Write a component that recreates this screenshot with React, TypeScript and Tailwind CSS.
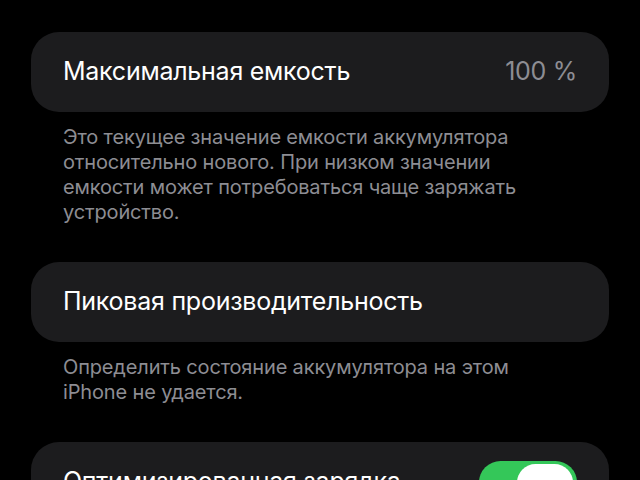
import React from "react";

const font = { fontFamily: "Inter, 'Noto Sans', 'Liberation Sans', sans-serif" };

function Card({ children }: { children: React.ReactNode }) {
  return (
    <div className="h-[80px] rounded-[28px] bg-[#1c1c1e] px-[32px] flex items-center justify-between">
      {children}
    </div>
  );
}

function Note({ children }: { children: React.ReactNode }) {
  return (
    <p className="mt-[13px] pl-[32px] pr-[56px] text-[20px] leading-[25px] text-[#8d8d93] tracking-[-0.15px]">
      {children}
    </p>
  );
}

function Toggle({ on }: { on: boolean }) {
  return (
    <div className={`relative w-[98px] h-[43px] rounded-full ${on ? "bg-[#34c759]" : "bg-[#39393d]"}`}>
      <div className="absolute right-[4px] top-[3px] w-[56px] h-[37px] rounded-full bg-white" />
    </div>
  );
}

export default function App() {
  return (
    <div className="w-[640px] h-[480px] overflow-hidden bg-black text-white" style={font}>
      <div className="px-[31px] pt-[32px]">
        <Card>
          <span className="text-[25px] tracking-[-0.25px]">Максимальная емкость</span>
          <span className="text-[25px] text-[#8d8d93] tracking-[-0.3px]">100 %</span>
        </Card>
        <Note>
          Это текущее значение емкости аккумулятора относительно нового. При низком значении
          емкости может потребоваться чаще заряжать устройство.
        </Note>

        <div className="mt-[37px]">
          <Card>
            <span className="text-[25px] tracking-[-0.25px]">Пиковая производительность</span>
          </Card>
        </div>
        <Note>Определить состояние аккумулятора на этом iPhone не удается.</Note>

        <div className="mt-[37px]">
          <Card>
            <span className="text-[25px] tracking-[-0.25px]">Оптимизированная зарядка</span>
            <Toggle on />
          </Card>
        </div>
      </div>
    </div>
  );
}
